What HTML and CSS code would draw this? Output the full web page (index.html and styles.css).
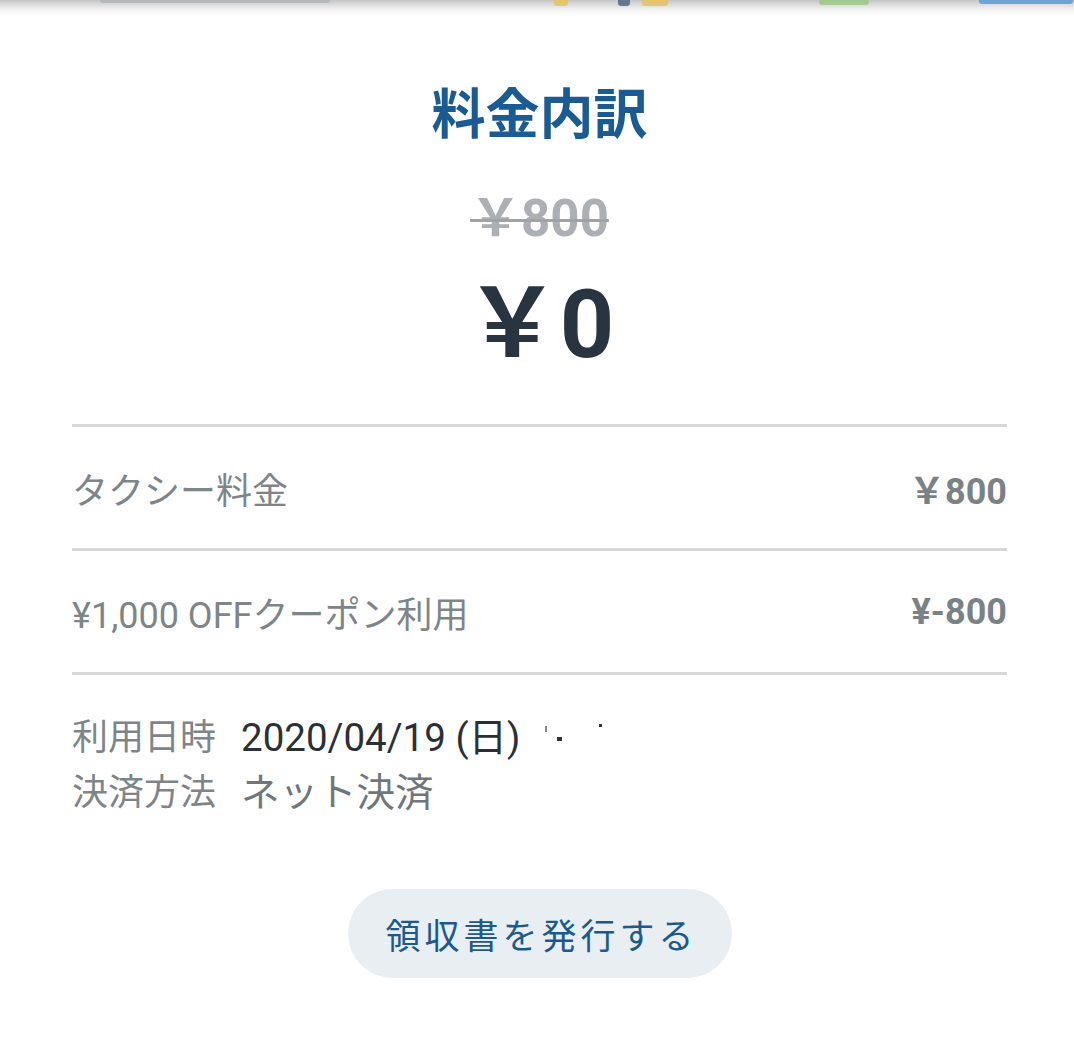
FILE: index.html
```html
<!DOCTYPE html>
<html lang="ja">
<head>
<meta charset="utf-8">
<link rel="stylesheet" href="styles.css">
</head>
<body>
<div class="topbar">
  <span class="blob blob-gray1"></span>
  <span class="blob blob-yellow1"></span>
  <span class="blob blob-dark"></span>
  <span class="blob blob-yellow2"></span>
  <span class="blob blob-green"></span>
  <span class="blob blob-blue"></span>
</div>
<main class="sheet">
  <h1 class="title">料金内訳</h1>
  <div class="old-price">￥800</div>
  <div class="total">￥0</div>
  <div class="rows">
    <div class="row">
      <span class="row-label">タクシー料金</span>
      <span class="row-value">￥800</span>
    </div>
    <div class="row">
      <span class="row-label">¥1,000 OFFクーポン利用</span>
      <span class="row-value">¥-800</span>
    </div>
  </div>
  <div class="info">
    <div class="info-line">
      <span class="info-label">利用日時</span>
      <span class="info-date">2020/04/19 (日)</span>
      <span class="redact"><i class="dot dot1"></i><i class="dot dot2"></i><i class="dot dot3"></i></span>
    </div>
    <div class="info-line">
      <span class="info-label">決済方法</span>
      <span class="info-value">ネット決済</span>
    </div>
  </div>
  <div class="actions">
    <button class="receipt-btn">領収書を発行する</button>
  </div>
</main>
</body>
</html>
```
FILE: styles.css
```css
html, body {
  margin: 0;
  padding: 0;
  background: #ffffff;
}
body {
  font-family: Roboto, "Noto Sans CJK JP", sans-serif;
  width: 1074px;
  height: 1040px;
  overflow: hidden;
}
.topbar {
  height: 16px;
  background: linear-gradient(to bottom, #c4c4c4 0px, #dedede 5px, #f4f4f4 10px, #ffffff 16px);
  display: flex;
  align-items: flex-start;
}
.blob {
  display: block;
  height: 6px;
  border-radius: 0 0 3px 3px;
  opacity: 0.85;
}
.blob-gray1 { margin-left: 100px; width: 230px; background: #b0b4b8; height: 3px; }
.blob-yellow1 { margin-left: 224px; width: 14px; background: #e6c35a; }
.blob-dark { margin-left: 50px; width: 12px; background: #4e6a80; }
.blob-yellow2 { margin-left: 12px; width: 26px; background: #e8c25c; }
.blob-green { margin-left: 151px; width: 50px; background: #9cc98a; height: 5px; }
.blob-blue { margin-left: 110px; width: 94px; background: #5e9bd6; height: 4px; }

.sheet {
  padding: 0 67px 0 72px;
  display: flex;
  flex-direction: column;
}
.title {
  margin: 63px 0 0;
  text-align: center;
  font-size: 54px;
  line-height: 64px;
  font-weight: 700;
  color: #1a5b93;
  font-family: "Noto Sans CJK JP", sans-serif;
}
.old-price {
  margin-top: 48px;
  align-self: center;
  font-size: 51px;
  line-height: 56px;
  font-weight: 700;
  color: #acb0b4;
  text-decoration: line-through;
  text-decoration-thickness: 3px;
  text-decoration-color: #9ea3a7;
}
.total {
  margin-top: 23px;
  text-align: center;
  font-size: 95px;
  line-height: 110px;
  font-weight: 700;
  color: #283540;
}
.rows {
  margin-top: 44px;
  border-top: 3px solid #d7d7d7;
}
.row {
  height: 121px;
  border-bottom: 3px solid #d7d7d7;
  display: flex;
  align-items: center;
  justify-content: space-between;
}
.row-label {
  font-size: 36px;
  color: #7e8589;
}
.row-value {
  font-size: 36px;
  font-weight: 700;
  color: #7b8286;
}
.info {
  padding-top: 31px;
  display: flex;
  flex-direction: column;
}
.info-line {
  display: flex;
  align-items: center;
  height: 55px;
}
.info-label {
  color: #7e8589;
  width: 169px;
  font-size: 36px;
}
.info-date {
  color: #2a3035;
  font-size: 38.5px;
}
.info-value {
  color: #6f777b;
  font-size: 38.5px;
}
.redact {
  margin-left: 24px;
  position: relative;
  width: 60px;
  height: 30px;
}
.dot {
  position: absolute;
  background: #333;
  display: block;
}
.dot1 { left: 0; top: 7px; width: 2px; height: 6px; background: #888; }
.dot2 { left: 12px; top: 18px; width: 5px; height: 4px; }
.dot3 { left: 54px; top: 5px; width: 3px; height: 3px; }
.actions {
  margin-top: 73px;
  display: flex;
  justify-content: center;
}
.receipt-btn {
  width: 384px;
  height: 89px;
  border: none;
  border-radius: 45px;
  background: #e8eef2;
  color: #1b5a8c;
  font-family: "Noto Sans CJK JP", sans-serif;
  font-size: 35px;
  letter-spacing: 4px;
  padding: 0 0 0 4px;
}
```
